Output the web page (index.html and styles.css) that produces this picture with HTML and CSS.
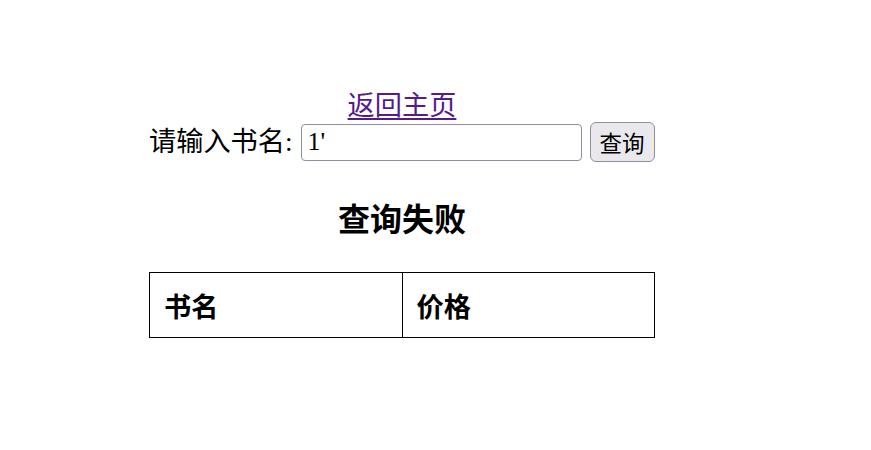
FILE: index.html
```html
<!DOCTYPE html>
<html lang="zh">
<head>
<meta charset="utf-8">
<title>查询</title>
<link rel="stylesheet" href="styles.css">
</head>
<body>
<div class="wrap">
  <div class="home-row"><a class="home" href="#">返回主页</a></div>
  <form class="search">
    <label class="label" for="bookname">请输入书名:</label>
    <input class="field" id="bookname" type="text" value="1'">
    <button class="btn" type="button">查询</button>
  </form>
  <h3 class="result">查询失败</h3>
  <table class="books">
    <tr><th>书名</th><th>价格</th></tr>
  </table>
</div>
</body>
</html>
```

FILE: styles.css
```css
html, body {
  margin: 0;
  padding: 0;
  background: #ffffff;
}
body {
  font-family: "Liberation Serif", "Noto Sans CJK SC", serif;
  font-size: 27.2px;
  color: #000;
}
.wrap {
  width: 506px;
  margin-left: 149px;
  padding-top: 88px;
}
.home-row {
  text-align: center;
  line-height: 36px;
  height: 34px;
}
.home {
  color: #551a8b;
  text-decoration: underline;
  text-underline-offset: 3px;
}
.search {
  display: flex;
  align-items: center;
  height: 40px;
  margin: 0;
}
.label {
  line-height: 36px;
  margin-right: 8px;
}
.field {
  box-sizing: border-box;
  width: 281px;
  height: 37px;
  border: 1px solid #8f8f9d;
  border-radius: 4px;
  padding: 0 6px;
  font-family: "Liberation Serif", "Noto Sans CJK SC", serif;
  font-size: 26px;
  color: #000;
  background: #fff;
  margin-right: 8px;
}
.btn {
  box-sizing: border-box;
  width: 65px;
  height: 40px;
  border: 1px solid #8f8f9d;
  border-radius: 6px;
  background: #e9e9ed;
  font-family: "Noto Sans CJK SC", sans-serif;
  font-size: 22.5px;
  color: #000;
  padding: 0;
}
.result {
  text-align: center;
  font-family: "Noto Sans CJK SC", sans-serif;
  font-size: 32px;
  font-weight: bold;
  line-height: 44px;
  margin: 33px 0 0;
  height: 44px;
}
.books {
  margin-top: 33px;
  width: 506px;
  border-collapse: collapse;
  font-family: "Noto Sans CJK SC", sans-serif;
}
.books th {
  width: 50%;
  border: 1px solid #000;
  text-align: left;
  font-size: 27.2px;
  font-weight: bold;
  line-height: 36px;
  padding: 14px 14px;
}
```
